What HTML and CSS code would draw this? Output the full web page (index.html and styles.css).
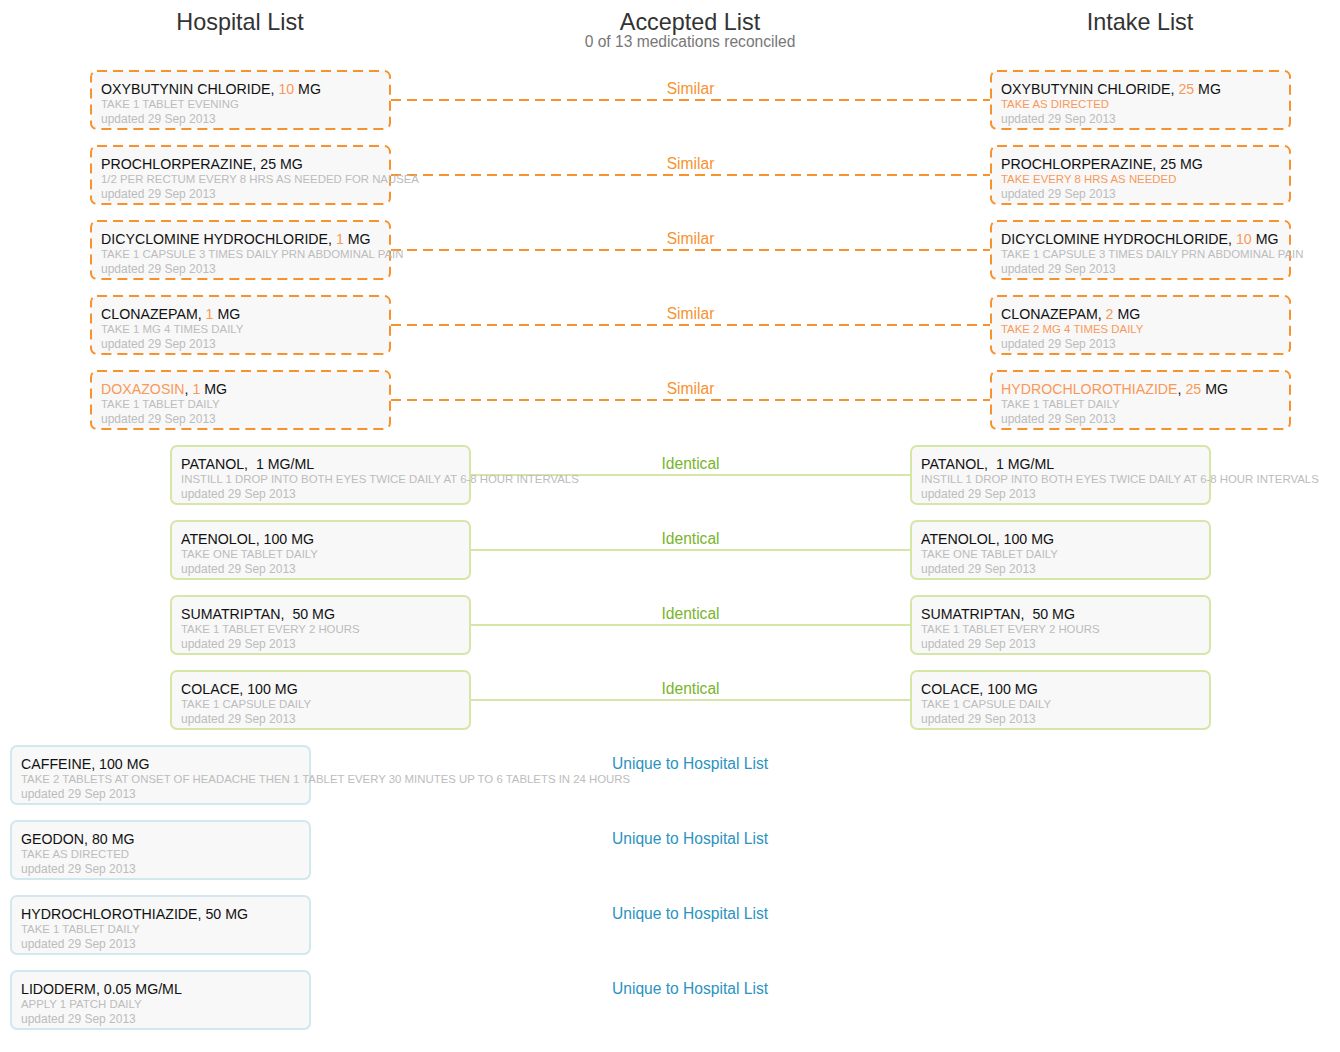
FILE: index.html
```html
<!DOCTYPE html>
<html>
<head>
<meta charset="utf-8">
<title>Medication Reconciliation</title>
<link rel="stylesheet" href="styles.css">
</head>
<body>
<div class="page">
  <header class="heads">
    <div class="head"><h2>Hospital List</h2></div>
    <div class="head"><h2>Accepted List</h2><p class="sub">0 of 13 medications reconciled</p></div>
    <div class="head"><h2>Intake List</h2></div>
  </header>

  <div class="row similar">
    <div class="card"><svg class="frame"><rect/></svg><div class="txt"><div class="name">OXYBUTYNIN CHLORIDE, <span class="diff">10</span> MG</div><div class="instr">TAKE 1 TABLET EVENING</div><div class="upd">updated 29 Sep 2013</div></div></div>
    <div class="link"><span class="label">Similar</span><div class="line"></div></div>
    <div class="card"><svg class="frame"><rect/></svg><div class="txt"><div class="name">OXYBUTYNIN CHLORIDE, <span class="diff">25</span> MG</div><div class="instr diff">TAKE AS DIRECTED</div><div class="upd">updated 29 Sep 2013</div></div></div>
  </div>

  <div class="row similar">
    <div class="card"><svg class="frame"><rect/></svg><div class="txt"><div class="name">PROCHLORPERAZINE, 25 MG</div><div class="instr">1/2 PER RECTUM EVERY 8 HRS AS NEEDED FOR NAUSEA</div><div class="upd">updated 29 Sep 2013</div></div></div>
    <div class="link"><span class="label">Similar</span><div class="line"></div></div>
    <div class="card"><svg class="frame"><rect/></svg><div class="txt"><div class="name">PROCHLORPERAZINE, 25 MG</div><div class="instr diff">TAKE EVERY 8 HRS AS NEEDED</div><div class="upd">updated 29 Sep 2013</div></div></div>
  </div>

  <div class="row similar">
    <div class="card"><svg class="frame"><rect/></svg><div class="txt"><div class="name">DICYCLOMINE HYDROCHLORIDE, <span class="diff">1</span> MG</div><div class="instr">TAKE 1 CAPSULE 3 TIMES DAILY PRN ABDOMINAL PAIN</div><div class="upd">updated 29 Sep 2013</div></div></div>
    <div class="link"><span class="label">Similar</span><div class="line"></div></div>
    <div class="card"><svg class="frame"><rect/></svg><div class="txt"><div class="name">DICYCLOMINE HYDROCHLORIDE, <span class="diff">10</span> MG</div><div class="instr">TAKE 1 CAPSULE 3 TIMES DAILY PRN ABDOMINAL PAIN</div><div class="upd">updated 29 Sep 2013</div></div></div>
  </div>

  <div class="row similar">
    <div class="card"><svg class="frame"><rect/></svg><div class="txt"><div class="name">CLONAZEPAM, <span class="diff">1</span> MG</div><div class="instr">TAKE 1 MG 4 TIMES DAILY</div><div class="upd">updated 29 Sep 2013</div></div></div>
    <div class="link"><span class="label">Similar</span><div class="line"></div></div>
    <div class="card"><svg class="frame"><rect/></svg><div class="txt"><div class="name">CLONAZEPAM, <span class="diff">2</span> MG</div><div class="instr diff">TAKE 2 MG 4 TIMES DAILY</div><div class="upd">updated 29 Sep 2013</div></div></div>
  </div>

  <div class="row similar">
    <div class="card"><svg class="frame"><rect/></svg><div class="txt"><div class="name"><span class="diff">DOXAZOSIN</span>, <span class="diff">1</span> MG</div><div class="instr">TAKE 1 TABLET DAILY</div><div class="upd">updated 29 Sep 2013</div></div></div>
    <div class="link"><span class="label">Similar</span><div class="line"></div></div>
    <div class="card"><svg class="frame"><rect/></svg><div class="txt"><div class="name"><span class="diff">HYDROCHLOROTHIAZIDE</span>, <span class="diff">25</span> MG</div><div class="instr">TAKE 1 TABLET DAILY</div><div class="upd">updated 29 Sep 2013</div></div></div>
  </div>

  <div class="row identical">
    <div class="card"><div class="txt"><div class="name">PATANOL,&nbsp; 1 MG/ML</div><div class="instr">INSTILL 1 DROP INTO BOTH EYES TWICE DAILY AT 6-8 HOUR INTERVALS</div><div class="upd">updated 29 Sep 2013</div></div></div>
    <div class="link"><span class="label">Identical</span><div class="line"></div></div>
    <div class="card"><div class="txt"><div class="name">PATANOL,&nbsp; 1 MG/ML</div><div class="instr">INSTILL 1 DROP INTO BOTH EYES TWICE DAILY AT 6-8 HOUR INTERVALS</div><div class="upd">updated 29 Sep 2013</div></div></div>
  </div>

  <div class="row identical">
    <div class="card"><div class="txt"><div class="name">ATENOLOL, 100 MG</div><div class="instr">TAKE ONE TABLET DAILY</div><div class="upd">updated 29 Sep 2013</div></div></div>
    <div class="link"><span class="label">Identical</span><div class="line"></div></div>
    <div class="card"><div class="txt"><div class="name">ATENOLOL, 100 MG</div><div class="instr">TAKE ONE TABLET DAILY</div><div class="upd">updated 29 Sep 2013</div></div></div>
  </div>

  <div class="row identical">
    <div class="card"><div class="txt"><div class="name">SUMATRIPTAN, &nbsp;50 MG</div><div class="instr">TAKE 1 TABLET EVERY 2 HOURS</div><div class="upd">updated 29 Sep 2013</div></div></div>
    <div class="link"><span class="label">Identical</span><div class="line"></div></div>
    <div class="card"><div class="txt"><div class="name">SUMATRIPTAN, &nbsp;50 MG</div><div class="instr">TAKE 1 TABLET EVERY 2 HOURS</div><div class="upd">updated 29 Sep 2013</div></div></div>
  </div>

  <div class="row identical">
    <div class="card"><div class="txt"><div class="name">COLACE, 100 MG</div><div class="instr">TAKE 1 CAPSULE DAILY</div><div class="upd">updated 29 Sep 2013</div></div></div>
    <div class="link"><span class="label">Identical</span><div class="line"></div></div>
    <div class="card"><div class="txt"><div class="name">COLACE, 100 MG</div><div class="instr">TAKE 1 CAPSULE DAILY</div><div class="upd">updated 29 Sep 2013</div></div></div>
  </div>

  <div class="row unique">
    <div class="card"><div class="txt"><div class="name">CAFFEINE, 100 MG</div><div class="instr">TAKE 2 TABLETS AT ONSET OF HEADACHE THEN 1 TABLET EVERY 30 MINUTES UP TO 6 TABLETS IN 24 HOURS</div><div class="upd">updated 29 Sep 2013</div></div></div>
    <div class="link"><span class="label">Unique to Hospital List</span></div>
    <div class="slot"></div>
  </div>

  <div class="row unique">
    <div class="card"><div class="txt"><div class="name">GEODON, 80 MG</div><div class="instr">TAKE AS DIRECTED</div><div class="upd">updated 29 Sep 2013</div></div></div>
    <div class="link"><span class="label">Unique to Hospital List</span></div>
    <div class="slot"></div>
  </div>

  <div class="row unique">
    <div class="card"><div class="txt"><div class="name">HYDROCHLOROTHIAZIDE, 50 MG</div><div class="instr">TAKE 1 TABLET DAILY</div><div class="upd">updated 29 Sep 2013</div></div></div>
    <div class="link"><span class="label">Unique to Hospital List</span></div>
    <div class="slot"></div>
  </div>

  <div class="row unique">
    <div class="card"><div class="txt"><div class="name">LIDODERM, 0.05 MG/ML</div><div class="instr">APPLY 1 PATCH DAILY</div><div class="upd">updated 29 Sep 2013</div></div></div>
    <div class="link"><span class="label">Unique to Hospital List</span></div>
    <div class="slot"></div>
  </div>
</div>
</body>
</html>
```

FILE: styles.css
```css
html, body {
  margin: 0;
  padding: 0;
  overflow: hidden;
  background: #ffffff;
}

body {
  font-family: "Liberation Sans", Arial, sans-serif;
  color: #111;
}

.page {
  width: 1380px;
}

.heads {
  display: grid;
  grid-template-columns: 450px 450px 450px;
  padding: 10px 0 0 15px;
  height: 55px;
  box-sizing: border-box;
}

.head {
  text-align: center;
}

.head h2 {
  margin: 0;
  font-size: 23.4px;
  font-weight: normal;
  line-height: 24px;
  color: #333;
}

.head .sub {
  margin: 0;
  font-size: 15.6px;
  line-height: 16px;
  color: #777;
}

.row {
  display: flex;
  height: 60px;
  margin-top: 15px;
}

.row.similar { padding: 0 89px 0 90px; }
.row.identical { padding: 0 169px 0 170px; }
.row.unique { padding: 0 10px; }

.card {
  position: relative;
  width: 301px;
  flex: 0 0 301px;
  height: 60px;
  box-sizing: border-box;
  border: 2px solid #d5e6a8;
  border-radius: 7px;
  background: #f8f8f8;
  padding: 9px 9px 0;
  white-space: nowrap;
}

.similar .card {
  border-color: transparent;
  background: transparent;
}

.unique .card {
  border-color: #d2e7ee;
}

.slot {
  width: 301px;
  flex: 0 0 301px;
}

.frame {
  position: absolute;
  left: -2px;
  top: -2px;
  width: 301px;
  height: 60px;
  overflow: visible;
}

.frame rect {
  x: 1px;
  y: 1px;
  width: 299px;
  height: 58px;
  rx: 6px;
  ry: 6px;
  fill: #f8f8f8;
  stroke: #f7922f;
  stroke-width: 2px;
  stroke-dasharray: 10 6;
}

.txt {
  position: relative;
}

.name {
  font-size: 14.2px;
  line-height: 16px;
  color: #111;
}

.instr {
  font-size: 11.4px;
  line-height: 15px;
  color: #bcbcbc;
}

.upd {
  font-size: 12px;
  line-height: 15px;
  color: #bcbcbc;
}

.diff {
  color: #f9985a;
}

.instr.diff {
  color: #f9985a;
}

.link {
  flex: 1;
  display: flex;
  flex-direction: column;
  align-items: center;
  padding-top: 10px;
}

.label {
  font-size: 15.6px;
  line-height: 18px;
}

.line {
  align-self: stretch;
  height: 2px;
  margin-top: 1px;
}

.similar .label { color: #f7922f; }
.similar .line {
  background: repeating-linear-gradient(to right, #f7922f 0 10px, transparent 10px 16px);
}

.identical .label { color: #78b52a; }
.identical .line { background: #d5e6a8; }

.unique .label { color: #2a93c0; }
```
